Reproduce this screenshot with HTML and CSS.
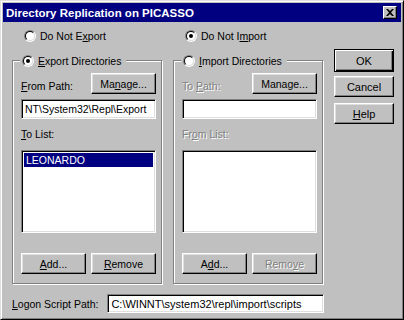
FILE: index.html
```html
<!DOCTYPE html>
<html>
<head>
<meta charset="utf-8">
<link rel="stylesheet" href="styles.css">
</head>
<body>
<div class="window">
  <div class="titlebar">
    <span class="title">Directory Replication on PICASSO</span>
    <span class="close"><svg width="8" height="7" viewBox="0 0 8 7"><path d="M0 0h2l2 2 2-2h2L5 3.5 8 7H6L4 5 2 7H0l3-3.5z" fill="#000"/></svg></span>
  </div>
  <div class="content">
    <div class="main">
      <div class="col">
        <div class="radio-row top-radio"><span class="radio"><span class="ring"></span></span><span>Do Not E<u>x</u>port</span></div>
        <div class="group">
          <div class="legend"><span class="radio"><span class="ring on"><span class="dot"></span></span></span><span><u>E</u>xport Directories</span></div>
          <div class="path-row"><span class="lbl"><u>F</u>rom Path:</span><button class="btn manage">Ma<u>n</u>age...</button></div>
          <div class="field">NT\System32\Repl\Export</div>
          <div class="lbl list-lbl"><u>T</u>o List:</div>
          <div class="list"><div class="sel">LEONARDO</div></div>
          <div class="btn-row"><button class="btn"><u>A</u>dd...</button><button class="btn"><u>R</u>emove</button></div>
        </div>
      </div>
      <div class="col">
        <div class="radio-row top-radio"><span class="radio"><span class="ring on"><span class="dot"></span></span></span><span>Do Not I<u>m</u>port</span></div>
        <div class="group">
          <div class="legend"><span class="radio"><span class="ring"></span></span><span><u>I</u>mport Directories</span></div>
          <div class="path-row"><span class="lbl dis">To <u>P</u>ath:</span><button class="btn manage">Manage...</button></div>
          <div class="field"></div>
          <div class="lbl list-lbl dis">Fr<u>o</u>m List:</div>
          <div class="list"></div>
          <div class="btn-row"><button class="btn">A<u>d</u>d...</button><button class="btn dis">Remo<u>v</u>e</button></div>
        </div>
      </div>
      <div class="buttons">
        <button class="btn default">OK</button>
        <button class="btn">Cancel</button>
        <button class="btn"><u>H</u>elp</button>
      </div>
    </div>
    <div class="logon-row">
      <span class="lbl"><u>L</u>ogon Script Path:</span>
      <div class="field logon">C:\WINNT\system32\repl\import\scripts</div>
    </div>
  </div>
</div>
</body>
</html>
```
FILE: styles.css
```css
* { box-sizing: border-box; }
html, body { margin: 0; padding: 0; background: #c0c0c0; }
body {
  font-family: "Liberation Sans", Arial, sans-serif;
  font-size: 10.5px;
  color: #000;
}
u { text-decoration: underline; text-underline-offset: 1px; }
.window {
  width: 404px;
  height: 320px;
  border: 1px solid;
  border-color: #dfdfdf #000 #000 #dfdfdf;
  box-shadow: inset 1px 1px 0 #fff, inset -1px -1px 0 #808080;
  padding: 2px;
  display: flex;
  flex-direction: column;
}
.titlebar {
  height: 19px;
  background: #000080;
  color: #fff;
  display: flex;
  align-items: center;
  justify-content: space-between;
  padding: 0 3px 0 3px;
}
.title { font-weight: bold; font-size: 11.5px; }
.close {
  width: 14px;
  height: 13px;
  background: #c0c0c0;
  border: 1px solid;
  border-color: #fff #000 #000 #fff;
  box-shadow: inset -1px -1px 0 #808080;
  display: flex;
  align-items: center;
  justify-content: center;
  margin-right: 1px;
}
.content {
  flex: 1;
  padding-left: 9px;
  display: flex;
  flex-direction: column;
}
.main { display: flex; gap: 10px; }
.col { width: 151px; display: flex; flex-direction: column; }
.radio-row { display: flex; align-items: center; gap: 4px; height: 13px; }
.top-radio { margin-top: 7px; padding-left: 12px; margin-bottom: 18px; }
.radio {
  width: 12px; height: 12px;
  border-radius: 50%;
  border: 1px solid;
  border-color: #808080 #fff #fff #808080;
  display: flex;
  flex: none;
}
.ring {
  flex: 1;
  border-radius: 50%;
  border: 1px solid;
  border-color: #000 #dfdfdf #dfdfdf #000;
  background: #fff;
  display: flex;
  align-items: center;
  justify-content: center;
}
.dot { width: 4px; height: 4px; border-radius: 50%; background: #000; }
.group {
  width: 150px;
  height: 224px;
  border: 1px solid #808080;
  box-shadow: 1px 1px 0 #fff, inset 1px 1px 0 #fff;
  padding: 0 5px 0 8px;
  display: flex;
  flex-direction: column;
}
.legend {
  display: flex;
  align-items: center;
  gap: 4px;
  height: 13px;
  margin-top: -7px;
  margin-left: -1px;
  padding: 0 5px 0 2px;
  background: #c0c0c0;
  align-self: flex-start;
}
.path-row {
  display: flex;
  justify-content: space-between;
  align-items: flex-end;
  margin-top: 6px;
  height: 21px;
}
.path-row .lbl { padding-bottom: 2px; }
.btn {
  font-family: inherit;
  font-size: 10.5px;
  color: #000;
  background: #c0c0c0;
  border: 1px solid;
  border-color: #fff #000 #000 #fff;
  box-shadow: inset -1px -1px 0 #808080, inset 1px 1px 0 #dfdfdf;
  padding: 0;
  height: 21px;
  display: flex;
  align-items: center;
  justify-content: center;
}
.manage { width: 65px; }
.field {
  margin-top: 5px;
  height: 20px;
  width: 135px;
  background: #fff;
  border: 1px solid;
  border-color: #808080 #fff #fff #808080;
  box-shadow: inset 1px 1px 0 #000, inset -1px -1px 0 #dfdfdf;
  padding: 0 2px 0 3px;
  display: flex;
  align-items: center;
  white-space: nowrap;
  overflow: hidden;
}
.list-lbl { margin-top: 9px; height: 13px; line-height: 13px; }
.list {
  margin-top: 9px;
  height: 83px;
  width: 135px;
  background: #fff;
  border: 1px solid;
  border-color: #808080 #fff #fff #808080;
  box-shadow: inset 1px 1px 0 #000, inset -1px -1px 0 #dfdfdf;
  padding: 2px;
}
.sel {
  background: #000080;
  color: #fff;
  height: 14px;
  line-height: 14px;
  padding-left: 2px;
}
.btn-row { margin-top: 20px; display: flex; gap: 5px; width: 135px; }
.btn-row .btn { flex: 1; }
.dis { color: #808080; text-shadow: 1px 1px 0 #fff; }
.buttons {
  width: 60px;
  display: flex;
  flex-direction: column;
  margin-top: 27px;
}
.buttons .btn { width: 60px; margin-bottom: 6px; font-size: 11px; }
.buttons .default {
  height: 23px;
  border: 1px solid #000;
  box-shadow: inset 1px 1px 0 #fff, inset -1px -1px 0 #000, inset -2px -2px 0 #808080;
  margin-bottom: 4px;
}
.logon-row {
  margin-top: 10px;
  display: flex;
  align-items: center;
  gap: 9px;
}
.logon-row .field.logon { margin-top: 0; width: 217px; height: 19px; font-size: 11px; }
```
